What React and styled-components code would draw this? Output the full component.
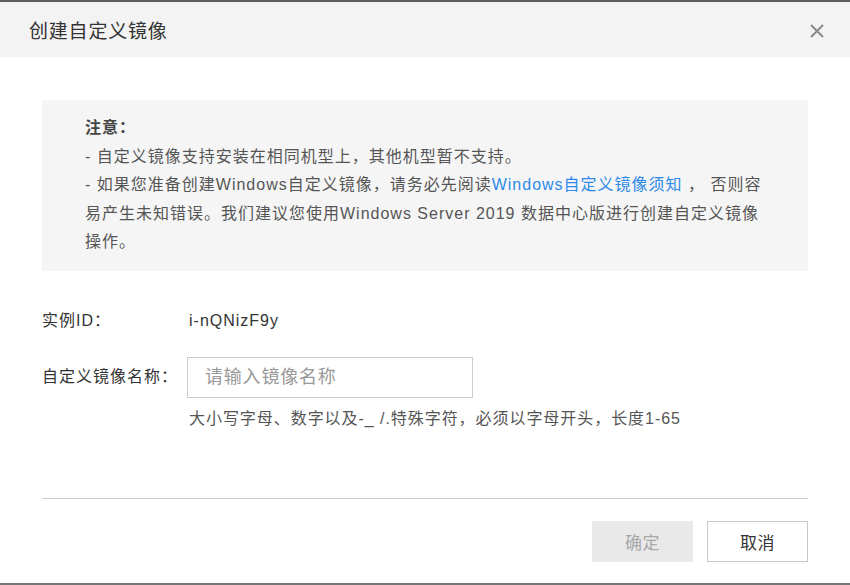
import styled, { createGlobalStyle } from "styled-components";

const GlobalStyle = createGlobalStyle`
  html, body {
    margin: 0;
    padding: 0;
    background: #ffffff;
  }
  body {
    font-family: "Liberation Sans", "Noto Sans CJK SC", sans-serif;
    color: #333;
  }
`;

const Dialog = styled.div`
  box-sizing: border-box;
  width: 850px;
  height: 585px;
  display: flex;
  flex-direction: column;
  background: #fff;
  border-top: 2px solid #5c5c5c;
  border-bottom: 2px solid #777;
  overflow: hidden;
`;

const Header = styled.div`
  height: 55px;
  flex-shrink: 0;
  display: flex;
  align-items: center;
  justify-content: space-between;
  padding: 0 24px 0 29px;
  background: #f3f3f3;
`;

const Title = styled.h2`
  margin: 0;
  font-size: 19px;
  font-weight: 400;
  color: #333;
  letter-spacing: 0.8px;
`;

const CloseButton = styled.button`
  border: 0;
  background: none;
  padding: 0;
  width: 18px;
  height: 18px;
  display: flex;
  align-items: center;
  justify-content: center;
  cursor: pointer;
  margin-top: 2px;
`;

const Body = styled.div`
  flex: 1;
  padding: 43px 42px 0;
  display: flex;
  flex-direction: column;
`;

const Notice = styled.div`
  background: #f5f5f5;
  padding: 14px 43px;
  font-size: 16px;
  line-height: 28.5px;
  color: #555;
  letter-spacing: 1px;
  white-space: nowrap;
`;

const NoticeTitle = styled.div`
  font-weight: 700;
  color: #444;
`;

const Link = styled.a`
  color: #2d8ae8;
  text-decoration: none;
`;

const Form = styled.div`
  margin-top: 38px;
  display: flex;
  flex-direction: column;
`;

const Row = styled.div`
  display: flex;
  align-items: center;
  margin-top: ${(p) => p.$gap || 0}px;
`;

const Label = styled.div`
  width: 145px;
  flex-shrink: 0;
  font-size: 16px;
  line-height: 24px;
  color: #333;
  letter-spacing: 1px;
`;

const Value = styled.div`
  padding-left: 2px;
  font-size: 16px;
  line-height: 24px;
  color: #333;
  letter-spacing: 1px;
`;

const Input = styled.input`
  box-sizing: border-box;
  width: 286px;
  height: 41px;
  border: 1px solid #ccc;
  padding: 0 17px;
  font-family: "Liberation Sans", "Noto Sans CJK SC", sans-serif;
  font-size: 18px;
  letter-spacing: 0.8px;
  color: #333;
  outline: none;
  &::placeholder {
    color: #999;
  }
`;

const Hint = styled.div`
  margin: 10px 0 0 147px;
  font-size: 16px;
  line-height: 22px;
  color: #555;
  letter-spacing: 0.95px;
`;

const Divider = styled.hr`
  margin: 68px 0 0;
  border: 0;
  border-top: 1px solid #ccc;
`;

const Footer = styled.div`
  display: flex;
  justify-content: flex-end;
  gap: 14px;
  margin-top: 22px;
`;

const Button = styled.button`
  box-sizing: border-box;
  width: 101px;
  height: 41px;
  font-family: "Liberation Sans", "Noto Sans CJK SC", sans-serif;
  font-size: 17px;
  letter-spacing: 0.5px;
  border: 1px solid ${(p) => (p.$disabled ? "#e9e9e9" : "#c8c8c8")};
  background: ${(p) => (p.$disabled ? "#e9e9e9" : "#fff")};
  color: ${(p) => (p.$disabled ? "#a8a8a8" : "#333")};
  cursor: ${(p) => (p.$disabled ? "not-allowed" : "pointer")};
`;

export default function App() {
  return (
    <>
      <GlobalStyle />
      <Dialog>
        <Header>
          <Title>创建自定义镜像</Title>
          <CloseButton aria-label="关闭">
            <svg width="14" height="14" viewBox="0 0 14 14">
              <path d="M1 1L13 13M13 1L1 13" stroke="#8a8a8a" strokeWidth="2" />
            </svg>
          </CloseButton>
        </Header>
        <Body>
          <Notice>
            <NoticeTitle>注意：</NoticeTitle>
            <div>- 自定义镜像支持安装在相同机型上，其他机型暂不支持。</div>
            <div>
              - 如果您准备创建Windows自定义镜像，请务必先阅读
              <Link href="#">Windows自定义镜像须知</Link> ， 否则容
              <br />
              易产生未知错误。我们建议您使用Windows Server 2019 数据中心版进行创建自定义镜像
              <br />
              操作。
            </div>
          </Notice>
          <Form>
            <Row>
              <Label>实例ID：</Label>
              <Value>i-nQNizF9y</Value>
            </Row>
            <Row $gap={24}>
              <Label>自定义镜像名称：</Label>
              <Input placeholder="请输入镜像名称" />
            </Row>
            <Hint>大小写字母、数字以及-_ /.特殊字符，必须以字母开头，长度1-65</Hint>
          </Form>
          <Divider />
          <Footer>
            <Button $disabled>确定</Button>
            <Button>取消</Button>
          </Footer>
        </Body>
      </Dialog>
    </>
  );
}
